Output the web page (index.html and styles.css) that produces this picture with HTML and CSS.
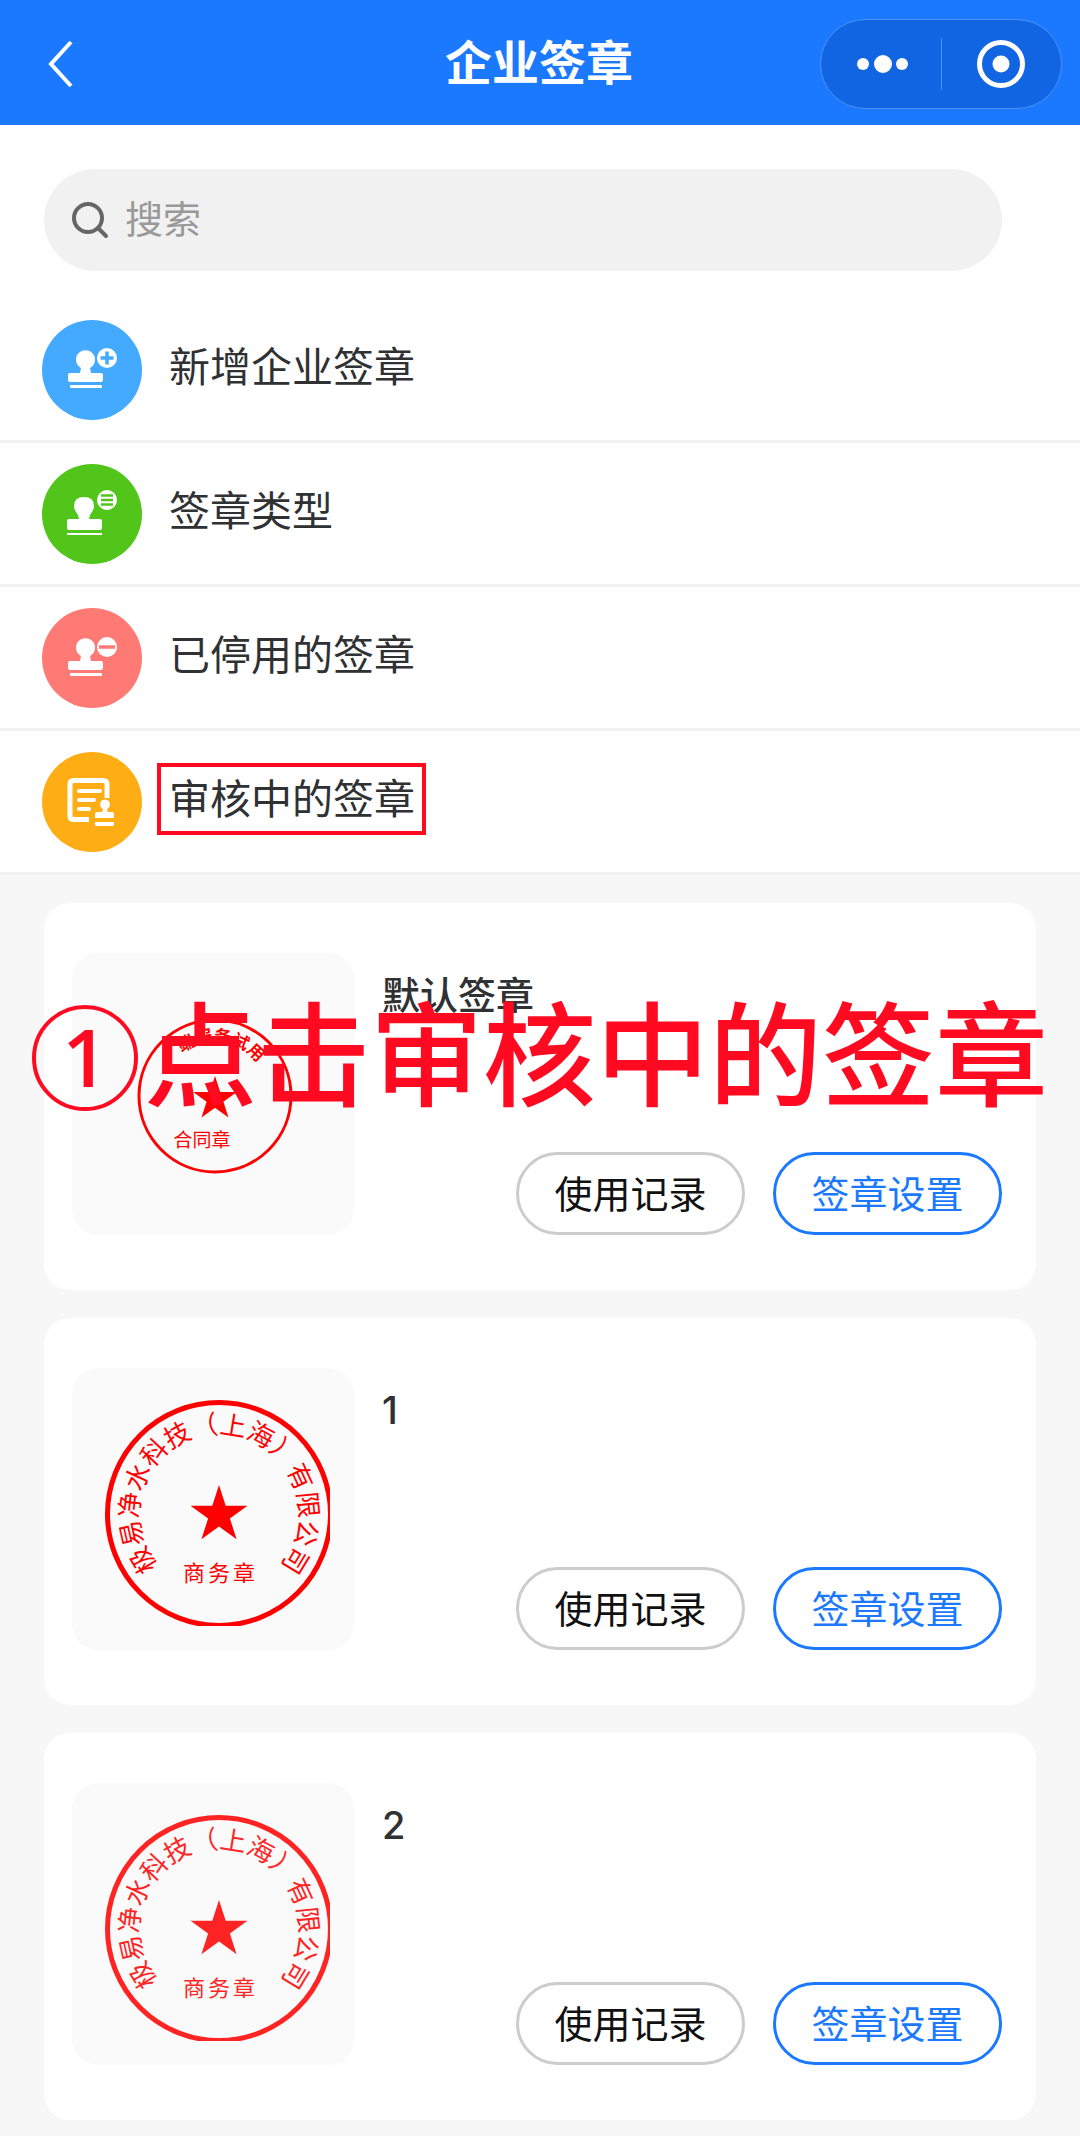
FILE: index.html
```html
<!DOCTYPE html>
<html lang="zh-CN">

<head>
    <meta charset="UTF-8">
    <meta name="viewport" content="width=device-width, initial-scale=1.0">
    <title>企业签章</title>
    <link rel="stylesheet" href="styles.css">
</head>
<body>
    <header class="navbar">
        <button class="back" aria-label="返回">
            <svg width="28" height="48" viewBox="0 0 28 48"><path d="M25 2 L5 24 L25 46" fill="none" stroke="#fff" stroke-width="4"/></svg>
        </button>
        <h1>企业签章</h1>
        <div class="capsule">
            <button aria-label="更多">
                <svg width="54" height="20" viewBox="0 0 54 20" fill="#fff"><circle cx="9" cy="10" r="6"/><circle cx="29" cy="10" r="9"/><circle cx="48" cy="10" r="6"/></svg>
            </button>
            <button aria-label="关闭">
                <svg width="50" height="50" viewBox="0 0 50 50"><circle cx="25" cy="25" r="21.5" fill="none" stroke="#fff" stroke-width="5"/><circle cx="25" cy="25" r="8.5" fill="#fff"/></svg>
            </button>
        </div>
    </header>

    <!-- Search box -->
    <div class="search-wrap">
        <label class="search">
            <svg width="38" height="38" viewBox="0 0 38 38" fill="none" stroke="#666" stroke-width="4"><circle cx="16" cy="17" r="14"/><path d="M26 27 L34 35" stroke-linecap="round"/></svg>
            <input type="search" placeholder="搜索" aria-label="搜索">
        </label>
    </div>

    <!-- Menu entries -->
    <nav class="menu">
        <a href="#add">
            <svg class="menu-icon blue" viewBox="0 0 100 100">
                <path class="white" d="M38 53 L39 48 A9.5 9.5 0 1 1 48 48 L49 53 H59 Q61 53 61 55 V60 Q61 62 59 62 H28 Q26 62 26 60 V55 Q26 53 28 53 Z"/>
                <rect class="white" x="28" y="65" width="32" height="3" rx="1"/>
                <circle class="white" cx="65" cy="38" r="10"/>
                <path class="mark" d="M58.500 38 H71.500 M65 31.500 V44.500" stroke-width="3.500"/>
            </svg>
            <span>新增企业签章</span>
        </a>
        <a href="#types">
            <svg class="menu-icon green" viewBox="0 0 100 100">
                <path class="white" d="M37 55 L36 51 Q32 46 32 42 Q32 33 42 33 Q52 33 52 42 Q52 46 48 51 L47 55 H58 Q60 55 60 57 V64 Q60 66 58 66 H27 Q25 66 25 64 V57 Q25 55 27 55 Z"/>
                <rect class="white" x="25" y="69" width="35" height="2"/>
                <circle class="white" cx="65" cy="36" r="10"/>
                <path class="mark" d="M59 31.500 H71 M59 36 H71 M59 40.500 H71" stroke-width="2.500"/>
            </svg>
            <span>签章类型</span>
        </a>
        <a href="#disabled">
            <svg class="menu-icon pink" viewBox="0 0 100 100">
                <path class="white" d="M38 53 L39 48 A9.500 9.500 0 1 1 48 48 L49 53 H59 Q61 53 61 55 V60 Q61 62 59 62 H28 Q26 62 26 60 V55 Q26 53 28 53 Z"/>
                <rect class="white" x="28" y="65" width="32" height="3" rx="1"/>
                <circle class="white" cx="65" cy="39" r="10"/>
                <path class="mark" d="M57 39 H73" stroke-width="3.500"/>
            </svg>
            <span>已停用的签章</span>
        </a>
        <a href="#review">
            <svg class="menu-icon orange" viewBox="0 0 100 100">
                <path d="M65 46 V32 Q65 28.500 61 28.500 H32 Q28 28.500 28 32 V64 Q28 67.500 32 67.500 H47" fill="none" stroke="#fff" stroke-width="5"/>
                <path d="M37 39 H58 M37 48 H52 M37 57 H47" stroke="#fff" stroke-width="4" stroke-linecap="round"/>
                <path class="white" d="M60 60 L61 57 A5 5 0 1 1 65 57 L66 60 H70 Q72 60 72 62 V66 H53 V62 Q53 60 55 60 Z"/>
                <rect class="white" x="53" y="70" width="19" height="4" rx="1"/>
            </svg>
            <span class="highlight">审核中的签章</span>
        </a>
    </nav>

    <!-- Seal cards -->
    <main class="seals">
        <section class="card">
            <div class="thumb">
                <svg class="seal" viewBox="0 0 234 234">
                    <circle cx="119" cy="119" r="76" fill="none" stroke-width="3"/>
                    <path id="arc-small" d="M119 173 A54 54 0 0 1 119 65 A54 54 0 0 1 119 173" fill="none" stroke="none"/>
                    <text class="arc-text-small"><textPath href="#arc-small" startOffset="52%">端服务试用</textPath></text>
                    <path class="star" stroke="none" d="M119 99 L124.200 114.900 L140.900 114.900 L127.400 124.700 L132.500 140.600 L119 130.800 L105.500 140.600 L110.600 124.700 L97.100 114.900 L113.800 114.900 Z"/>
                    <text class="seal-label-small" x="106" y="170">合同章</text>
                </svg>
            </div>
            <div class="info">
                <h2>默认签章</h2>
                <div class="actions">
                    <button class="btn">使用记录</button>
                    <button class="btn primary">签章设置</button>
                </div>
            </div>
            <!-- Step hint over the card -->
            <p class="hint"><span class="step">1</span>点击审核中的签章</p>
        </section>

        <section class="card">
            <div class="thumb">
                <svg class="seal" viewBox="0 0 234 234">
                    <circle cx="123" cy="122" r="111.500" fill="none" stroke-width="5"/>
                    <path id="arc" d="M123 202 A80 80 0 0 1 123 42 A80 80 0 0 1 123 202" fill="none" stroke="none"/>
                    <text class="arc-text"><textPath href="#arc" startOffset="50%">极易净水科技（上海）有限公司</textPath></text>
                    <path class="star" stroke="none" d="M123 93 L129.700 113.700 L151.500 113.700 L133.900 126.500 L140.600 147.300 L123 134.500 L105.400 147.300 L112.100 126.500 L94.500 113.700 L116.300 113.700 Z"/>
                    <text class="seal-label" x="98 123 148" y="189">商务章</text>
                </svg>
            </div>
            <div class="info">
                <h2>1</h2>
                <div class="actions">
                    <button class="btn">使用记录</button>
                    <button class="btn primary">签章设置</button>
                </div>
            </div>
        </section>

        <section class="card">
            <div class="thumb">
                <svg class="seal light" viewBox="0 0 234 234">
                    <circle cx="123" cy="122" r="111.500" fill="none" stroke-width="5"/>
                    <text class="arc-text"><textPath href="#arc" startOffset="50%">极易净水科技（上海）有限公司</textPath></text>
                    <path class="star" stroke="none" d="M123 93 L129.700 113.700 L151.500 113.700 L133.900 126.500 L140.600 147.300 L123 134.500 L105.400 147.300 L112.100 126.500 L94.500 113.700 L116.300 113.700 Z"/>
                    <text class="seal-label" x="98 123 148" y="189">商务章</text>
                </svg>
            </div>
            <div class="info">
                <h2>2</h2>
                <div class="actions">
                    <button class="btn">使用记录</button>
                    <button class="btn primary">签章设置</button>
                </div>
            </div>
        </section>
    </main>
</body>
</html>
```
FILE: styles.css
```css
* {
    box-sizing: border-box;
}

body {
    margin: 0;
    font-family: "Liberation Sans", "Noto Sans CJK SC", sans-serif;
    color: #303133;
    background-color: #f7f7f7;
}

button {
    font-family: inherit;
    background: none;
    border: none;
    padding: 0;
    cursor: pointer;
}

svg {
    display: block;
}

/* Top bar */
.navbar {
    display: grid;
    grid-template-columns: 1fr auto 1fr;
    align-items: center;
    height: 125px;
    padding: 2px 18px 0 46px;
    background-color: #1a79ff;
    color: #fff;
}

.back {
    justify-self: start;
}

.navbar h1 {
    margin: 0 0 0 -30px; /* side paddings differ, keep the title centred */
    font-size: 47px;
    line-height: 60px;
    font-weight: 700;
}

.capsule {
    justify-self: end;
    display: flex;
    align-items: center;
    width: 242px;
    height: 90px;
    border: 1px solid #4a93f8;
    border-radius: 45px;
    background-color: #1165e3;
}

.capsule button {
    flex: 1;
    display: flex;
    justify-content: center;
    align-items: center;
    height: 52px;
}

.capsule button + button {
    border-left: 1px solid #4a93f8;
}

/* Search */
.search-wrap {
    padding: 44px 78px 28px 44px;
    background-color: #fff;
}

.search {
    display: flex;
    align-items: center;
    gap: 15px;
    height: 102px;
    padding: 0 28px;
    border-radius: 51px;
    background-color: #f1f1f1;
}

.search input {
    flex: 1;
    min-width: 0;
    padding: 0;
    border: none;
    outline: none;
    background: none;
    font-family: inherit;
    font-size: 38px;
    color: #303133;
}

.search input::placeholder {
    color: #999;
    opacity: 1;
}

/* Menu list */
.menu a {
    display: flex;
    align-items: center;
    height: 144px;
    padding-left: 42px;
    border-bottom: 3px solid #f2f2f2;
    background-color: #fff;
    color: #303133;
    font-size: 41px;
    text-decoration: none;
}

.menu span {
    margin: 0 0 6px 15px;
    padding: 2px 7px 0 8px;
    border: 4px solid transparent;
    line-height: 62px;
}

.menu .highlight {
    border-color: #ff0a20;
}

.menu-icon {
    width: 100px;
    height: 100px;
    border-radius: 50%;
    background-color: currentColor;
}

.blue { color: #43aaff; }
.green { color: #52c51a; }
.pink { color: #ff7a75; }
.orange { color: #ffad14; }

.white {
    fill: #fff;
}

.mark {
    stroke: currentColor;
    fill: none;
}

/* Cards */
.seals {
    display: flex;
    flex-direction: column;
    gap: 28px;
    padding: 28px 44px 16px;
}

.card {
    position: relative;
    display: flex;
    gap: 28px;
    padding: 50px 34px 55px 28px;
    border-radius: 26px;
    background-color: #fff;
}

.thumb {
    display: flex;
    justify-content: center;
    align-items: center;
    width: 282px;
    height: 282px;
    border-radius: 26px;
    background-color: #fafafa;
}

.info {
    flex: 1;
    display: flex;
    flex-direction: column;
    justify-content: space-between;
}

.info h2 {
    margin: 14px 0 0;
    font-family: Inter, "Noto Sans CJK SC", sans-serif;
    font-size: 38px;
    line-height: 56px;
    font-weight: 500;
}

.actions {
    display: flex;
    justify-content: flex-end;
    gap: 28px;
}

.btn {
    width: 229px;
    height: 83px;
    padding-bottom: 5px;
    border: 3px solid #ccc;
    border-radius: 42px;
    font-size: 38px;
    color: #111;
}

.btn.primary {
    border-color: #1a79ff;
    color: #1a79ff;
}

/* Seals */
.seal {
    width: 234px;
    height: 234px;
    overflow: hidden;
    fill: #f00;
    stroke: #f00;
}

.seal.light {
    fill: #ff2424;
    stroke: #ff2424;
}

.seal text {
    stroke: none;
    text-anchor: middle;
}

.arc-text {
    font-size: 26px;
}

.arc-text-small {
    font-size: 17px;
    font-weight: 700;
}

.seal-label {
    font-size: 22px;
}

.seal-label-small {
    font-size: 19px;
}

/* Step hint */
.hint {
    position: absolute;
    top: 99px;
    left: -12px;
    display: flex;
    align-items: center;
    gap: 6px;
    margin: 0;
    font-size: 113px;
    line-height: 112px;
    font-weight: 500;
    color: #ff0a20;
    white-space: nowrap;
    pointer-events: none;
}

.step {
    width: 106px;
    height: 106px;
    border: 4px solid #ff0a20;
    border-radius: 50%;
    font-family: "Open Sans", sans-serif;
    font-size: 80px;
    line-height: 94px;
    font-weight: 600;
    text-align: center;
}
```
